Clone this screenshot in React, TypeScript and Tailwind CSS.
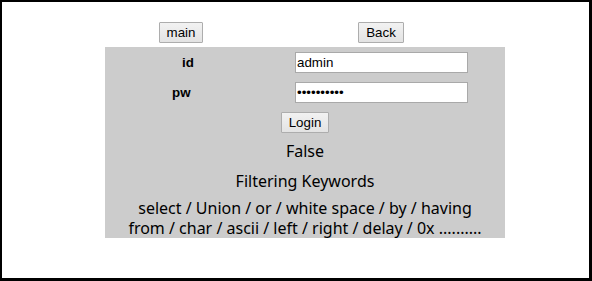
import React from 'react';

// Login form panel
const App = () => {
  const btn =
    "h-[21px] border border-[#adadad] bg-gradient-to-b from-[#f2f2f2] to-[#e3e3e3] text-[13.33px] leading-none text-black font-['Liberation_Sans',Arial,sans-serif] rounded-[1px]";
  const input =
    "w-[173px] h-[21px] border border-[#a9a9a9] bg-white px-[1px] text-[13.33px] text-black font-['Liberation_Sans',Arial,sans-serif] outline-none";

  return (
    <div className="w-[592px] h-[281px] box-border bg-white border-black border-l-2 border-t-2 border-r-[3px] border-b-[3px] overflow-hidden">
      {/* top buttons */}
      <div className="flex ml-[79px] mt-[20px]">
        <div className="w-[200px] flex justify-center">
          <button className={`${btn} w-[44px]`}>main</button>
        </div>
        <div className="w-[200px] flex justify-center">
          <button className={`${btn} w-[46px]`}>Back</button>
        </div>
      </div>

      {/* gray panel */}
      <div className="ml-[103px] mt-[4px] w-[400px] h-[191px] bg-[#cccccc] pt-[5px]">
        <div className="flex items-center h-[21px]">
          <div className="w-[190px] pl-[77px] text-[13.33px] font-bold text-black font-['Liberation_Sans',Arial,sans-serif]">id</div>
          <input className={input} type="text" value="admin" readOnly />
        </div>
        <div className="flex items-center h-[21px] mt-[9px]">
          <div className="w-[190px] pl-[67px] text-[13.33px] font-bold text-black font-['Liberation_Sans',Arial,sans-serif]">pw</div>
          <input className={input} type="password" value="1234567890" readOnly />
        </div>
        <div className="flex justify-center mt-[9px]">
          <button className={`${btn} w-[48px]`}>Login</button>
        </div>

        <div className="text-center text-[16px] text-black font-['Noto_Sans',sans-serif] leading-[21px]">
          <div className="mt-[8px]">False</div>
          <div className="mt-[9px]">Filtering Keywords</div>
          <div className="mt-[6px] leading-[20px]">select / Union / or / white space / by / having</div>
          <div className="leading-[20px]">from / char / ascii / left / right / delay / 0x ..........</div>
        </div>
      </div>
    </div>
  );
};

export default App;
